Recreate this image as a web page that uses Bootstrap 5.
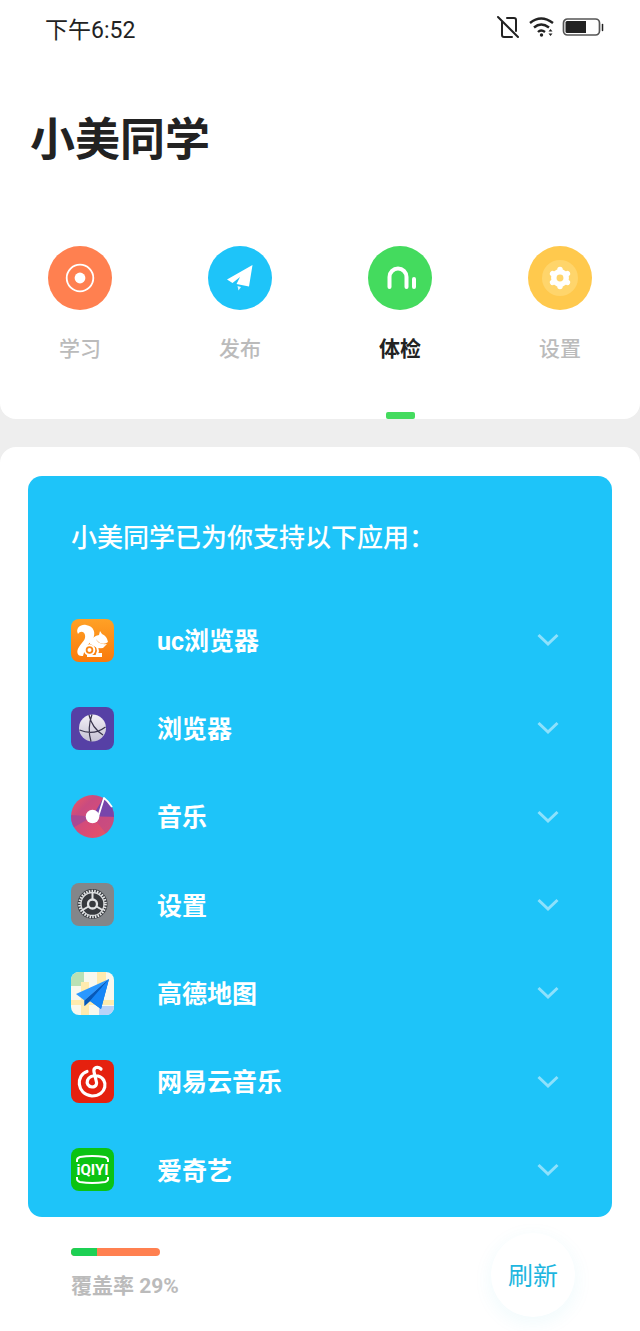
<!DOCTYPE html>
<html lang="zh-CN">
<head>
<meta charset="utf-8">
<meta name="viewport" content="width=device-width, initial-scale=1">
<title>小美同学</title>
<link rel="stylesheet" href="https://cdn.jsdelivr.net/npm/bootstrap@5.3.0/dist/css/bootstrap.min.css">
<style>
  body { font-family: Roboto, "Noto Sans CJK SC", sans-serif; background: #eee; color: #222; }
  .status-bar { height: 58px; padding: 0 36px 0 45px; font-size: 23px; }
  .status-bar time { padding-top: 4px; }
  .status-bar svg { margin-bottom: 5px; }
  .page-title { font-size: 45px; line-height: 66px; font-weight: 700; margin: 50px 30px 72px; }
  .top-panel { border-radius: 0 0 16px 16px; }
  .tab-link { color: #bbb; font-size: 21px; line-height: 32px; font-weight: 500; }
  .tab-link.active { color: #222; font-weight: 700; }
  .tab-link svg { width: 64px; height: 64px; margin-bottom: 23px; }
  .tab-link::after { content: ""; width: 29px; height: 7px; border-radius: 2px; margin-top: 47px; }
  .tab-link.active::after { background: #44db5e; }
  .main-panel { margin-top: 28px; padding: 29px 28px 14px; border-radius: 16px 16px 0 0; }
  .app-card { background: #1ec4f9; border-radius: 14px; padding: 45px 43px 3px; }
  .app-heading { font-size: 26px; line-height: 34px; font-weight: 500; margin: 0 0 41px; }
  .app-list { grid-auto-rows: 1fr; min-height: 618px; }
  .app-row { color: #fff; font-size: 25px; font-weight: 700; gap: 43px; padding-right: 9px; }
  .app-row span { padding-top: 3px; }
  .app-icon { width: 43px; height: 43px; flex: none; }
  .chevron { width: 24px; height: 16px; }
  .bottom-bar { padding: 16px 37px 0 43px; }
  .coverage { margin-top: 15px; }
  .coverage .progress { width: 89px; height: 8px; border-radius: 4px; background: #ff8050; margin-bottom: 15px; }
  .coverage .progress-bar { background: #1dd054; }
  .coverage-text { font-size: 21px; line-height: 30px; font-weight: 700; color: #bbb; }
  .refresh-btn { width: 84px; height: 84px; font-size: 25px; color: #1eb6e0; box-shadow: 0 5px 20px rgba(30,180,215,.07); }
  .refresh-btn.btn { padding: 4px 0 0; }
</style>
</head>
<body class="d-flex flex-column min-vh-100">
<header class="top-panel bg-white">
  <div class="status-bar d-flex align-items-center justify-content-between">
    <time>下午6:52</time>
    <svg width="108" height="28" viewBox="0 0 108 28" fill="none" stroke="#222" stroke-width="2" stroke-linecap="round" aria-hidden="true">
      <path d="M2 4 22 24M11 5h7q2 0 2 2v11M6 9v13q0 2 2 2h8"/>
      <path d="M34 10q11-9 23 0M38 14.500q7-6 15 0M42 19q3-3 7 0" stroke-width="2.400" stroke-linecap="butt"/>
      <circle cx="45.500" cy="22" r="1.700" fill="#222" stroke="none"/>
      <path d="M54.500 16 56.500 18.500h-4zM54.500 23 52.500 20.500h4z" fill="#222" stroke="none"/>
      <rect x="67.500" y="6" width="36" height="16" rx="4" stroke="#555" stroke-width="1.700"/>
      <path d="M71 8h19v12H71q-1.500 0-1.500-1.500v-9Q69.500 8 71 8z" fill="#222" stroke="none"/>
      <path d="M106.500 11.500v6" stroke-width="1.500"/>
    </svg>
  </div>
  <h1 class="page-title">小美同学</h1>
  <nav class="row g-0 text-center">
    <a class="tab-link col d-flex flex-column align-items-center text-decoration-none" href="#study">
      <svg viewBox="0 0 64 64" aria-hidden="true"><circle cx="32" cy="32" r="32" fill="#ff8050"/><circle cx="32" cy="32" r="13.300" fill="none" stroke="#fff" stroke-width="1.800"/><circle cx="32" cy="32" r="5.400" fill="#fff"/></svg>
      学习</a>
    <a class="tab-link col d-flex flex-column align-items-center text-decoration-none" href="#publish">
      <svg viewBox="0 0 64 64" aria-hidden="true"><circle cx="32" cy="32" r="32" fill="#1ec4f9"/><path d="M44.500 19 19 33.500 24.500 37l7.500-6-3.500 7 12.500 2.500z" fill="#fff"/><path d="M29.500 40l3.500 1-2.500 3.500z" fill="#fff" opacity=".85"/></svg>
      发布</a>
    <a class="tab-link active col d-flex flex-column align-items-center text-decoration-none" href="#check" aria-current="page">
      <svg viewBox="0 0 64 64" aria-hidden="true"><circle cx="32" cy="32" r="32" fill="#44db5e"/><path d="M21.500 41V31a8.500 8.500 0 0 1 17 0v10M46 33v8" fill="none" stroke="#fff" stroke-width="4" stroke-linecap="round"/></svg>
      体检</a>
    <a class="tab-link col d-flex flex-column align-items-center text-decoration-none" href="#settings">
      <svg viewBox="0 0 64 64" aria-hidden="true"><circle cx="32" cy="32" r="32" fill="#ffc94d"/><circle cx="32" cy="32" r="18" fill="#ffd56b"/><circle cx="32" cy="32" r="6.200" fill="none" stroke="#fff" stroke-width="5.500"/><path d="M32 23.500v1M32 39.500v1M24.600 27.700l.9.500M38.500 35.800l.9.500M24.600 36.300l.9-.5M38.500 28.200l.9-.5" stroke="#fff" stroke-width="5.500" stroke-linecap="round"/></svg>
      设置</a>
  </nav>
</header>

<main class="main-panel bg-white flex-grow-1">
  <section class="app-card text-white">
    <h2 class="app-heading">小美同学已为你支持以下应用：</h2>
    <div class="app-list d-grid">
      <button type="button" class="app-row btn border-0 rounded-0 py-0 ps-0 d-flex align-items-center text-start">
        <svg class="app-icon" viewBox="0 0 43 43" aria-hidden="true"><defs><linearGradient id="ucBg" x2="0" y2="1"><stop stop-color="#ffa126"/><stop offset="1" stop-color="#f97a0c"/></linearGradient></defs><rect width="43" height="43" rx="8" fill="url(#ucBg)"/><path d="M7 15C4 9 10 5 15 6c8 1 10 8 7 14-2 4-7 6-8 10l-2 7c-6 1-7-5-4-9 3-5 7-7 6-12-1-4-5-4-7-1z" fill="#fff"/><path d="M19 23q3-6 9-7l1-4 2 3q5 2 6 8-3 3-8 1-3-2-4-4 2 6 11 5l-4 4q-7 1-12-4z" fill="#fff"/><circle cx="18.500" cy="31" r="4.800" fill="none" stroke="#fff" stroke-width="2"/><circle cx="18.500" cy="31" r="2" fill="#fff"/><path d="M19 24q8 1 8 8l-1 3h4v2H16" fill="none" stroke="#fff" stroke-width="2"/></svg>
        <span class="flex-grow-1">uc浏览器</span>
        <svg class="chevron" viewBox="0 0 24 16" fill="none" stroke="#8de1fc" stroke-width="3" aria-hidden="true"><path d="M2.500 3 12 12 21.500 3"/></svg>
      </button>
      <button type="button" class="app-row btn border-0 rounded-0 py-0 ps-0 d-flex align-items-center text-start">
        <svg class="app-icon" viewBox="0 0 43 43" aria-hidden="true"><defs><linearGradient id="globe" x2="0" y2="1"><stop stop-color="#f3f0f7"/><stop offset="1" stop-color="#c5c1d3"/></linearGradient></defs><rect width="43" height="43" rx="8" fill="#5640a5"/><circle cx="21.500" cy="21" r="13.500" fill="url(#globe)"/><path d="M21 7.500q-5 14-1 27M8.500 23q14 6 26-3M18 8q3 13 14 20" fill="none" stroke="#38344c" stroke-width="1.200"/></svg>
        <span class="flex-grow-1">浏览器</span>
        <svg class="chevron" viewBox="0 0 24 16" fill="none" stroke="#8de1fc" stroke-width="3" aria-hidden="true"><path d="M2.500 3 12 12 21.500 3"/></svg>
      </button>
      <button type="button" class="app-row btn border-0 rounded-0 py-0 ps-0 d-flex align-items-center text-start">
        <svg class="app-icon" viewBox="0 0 43 43" aria-hidden="true"><defs><linearGradient id="disc" y2="1"><stop stop-color="#ef5a60"/><stop offset=".3" stop-color="#c94b80"/><stop offset=".55" stop-color="#d84b77"/><stop offset="1" stop-color="#e95561"/></linearGradient><clipPath id="discClip"><circle cx="21.500" cy="21.500" r="21.500"/></clipPath></defs><circle cx="21.500" cy="21.500" r="21.500" fill="url(#disc)"/><g clip-path="url(#discClip)"><path d="M21.500 21.500 34 0h9v22z" fill="#7745ab"/><path d="M21.500 21.500 0 20v14z" fill="#9a489c" opacity=".7"/><path d="M21.500 21.500H43v17h-8z" fill="#b34790" opacity=".5"/></g><circle cx="21.500" cy="21.500" r="6.800" fill="#fff"/><path d="M27 22 33 3q4 3 8 9" fill="none" stroke="#fff" stroke-width="1.800" stroke-linejoin="round"/></svg>
        <span class="flex-grow-1">音乐</span>
        <svg class="chevron" viewBox="0 0 24 16" fill="none" stroke="#8de1fc" stroke-width="3" aria-hidden="true"><path d="M2.500 3 12 12 21.500 3"/></svg>
      </button>
      <button type="button" class="app-row btn border-0 rounded-0 py-0 ps-0 d-flex align-items-center text-start">
        <svg class="app-icon" viewBox="0 0 43 43" aria-hidden="true"><rect width="43" height="43" rx="8" fill="#83868a"/><circle cx="21.500" cy="21" r="15" fill="#373a3f"/><circle cx="21.500" cy="21" r="12.800" fill="none" stroke="#e5e7e9" stroke-width="3" stroke-dasharray="1.500 1.180"/><circle cx="21.500" cy="21" r="11.500" fill="none" stroke="#d8dadc" stroke-width="1.300"/><circle cx="21.500" cy="21" r="4.500" fill="none" stroke="#e1e3e5" stroke-width="2.300"/><path d="M21.500 16V9M17.500 23.500l-6 3.500M25.500 23.500l6 3.500" stroke="#e1e3e5" stroke-width="2"/></svg>
        <span class="flex-grow-1">设置</span>
        <svg class="chevron" viewBox="0 0 24 16" fill="none" stroke="#8de1fc" stroke-width="3" aria-hidden="true"><path d="M2.500 3 12 12 21.500 3"/></svg>
      </button>
      <button type="button" class="app-row btn border-0 rounded-0 py-0 ps-0 d-flex align-items-center text-start">
        <svg class="app-icon" viewBox="0 0 43 43" aria-hidden="true"><defs><clipPath id="mapClip"><rect width="43" height="43" rx="8"/></clipPath></defs><g clip-path="url(#mapClip)"><path d="M0 0h43v43H0z" fill="#f8f8ee"/><path d="M0 0h13v14H0z" fill="#b9e1b5"/><path d="M10 10h8v33h-8zM26 0h9v14h-9zM0 28h43v5H0z" fill="#ffebae"/><path d="M28 34h15v9H28z" fill="#b9d2f8"/></g><path d="M38 7 5 22l8.500 6.500z" fill="#2a98ff"/><path d="M38 7 13.500 28.500V34l5.500-5 11 8z" fill="#0873e6"/><path d="M38 7 13.500 28.500V34l5.500-5z" fill="#0759b8"/><path d="M38 7 19 29l11 8z" fill="#1586f7"/></svg>
        <span class="flex-grow-1">高德地图</span>
        <svg class="chevron" viewBox="0 0 24 16" fill="none" stroke="#8de1fc" stroke-width="3" aria-hidden="true"><path d="M2.500 3 12 12 21.500 3"/></svg>
      </button>
      <button type="button" class="app-row btn border-0 rounded-0 py-0 ps-0 d-flex align-items-center text-start">
        <svg class="app-icon" viewBox="0 0 43 43" aria-hidden="true"><rect width="43" height="43" rx="8" fill="#e5210f"/><path d="M16 11.500C5 15 5 34 21 36c15 0 17-17 6-20-12-2-14 10-6 11 5 0 5-4 4-7l-2-8c-1-5 4-6 7-3" fill="none" stroke="#fff" stroke-width="3.200" stroke-linecap="round"/></svg>
        <span class="flex-grow-1">网易云音乐</span>
        <svg class="chevron" viewBox="0 0 24 16" fill="none" stroke="#8de1fc" stroke-width="3" aria-hidden="true"><path d="M2.500 3 12 12 21.500 3"/></svg>
      </button>
      <button type="button" class="app-row btn border-0 rounded-0 py-0 ps-0 d-flex align-items-center text-start">
        <svg class="app-icon" viewBox="0 0 43 43" aria-hidden="true"><rect width="43" height="43" rx="8" fill="#0bc313"/><path d="M6 14v-2q0-2 3-3 12-2 25 0 3 1 3 3v2M6 29v2q0 2 3 3 12 2 25 0 3-1 3-3v-2" fill="none" stroke="#fff" stroke-width="2"/><text x="21.500" y="27" fill="#fff" text-anchor="middle" font-family="Roboto, sans-serif" font-size="15" font-weight="700">iQIYI</text></svg>
        <span class="flex-grow-1">爱奇艺</span>
        <svg class="chevron" viewBox="0 0 24 16" fill="none" stroke="#8de1fc" stroke-width="3" aria-hidden="true"><path d="M2.500 3 12 12 21.500 3"/></svg>
      </button>
    </div>
  </section>
  <div class="bottom-bar d-flex justify-content-between align-items-start">
    <div class="coverage">
      <div class="progress" role="progressbar" aria-labelledby="coverage-text" aria-valuenow="29" aria-valuemin="0" aria-valuemax="100"><div class="progress-bar" style="width:29%"></div></div>
      <div class="coverage-text" id="coverage-text">覆盖率 29%</div>
    </div>
    <button type="button" class="refresh-btn btn bg-white border-0 rounded-circle">刷新</button>
  </div>
</main>
<script src="https://cdn.jsdelivr.net/npm/bootstrap@5.3.0/dist/js/bootstrap.bundle.min.js"></script>
</body>
</html>
